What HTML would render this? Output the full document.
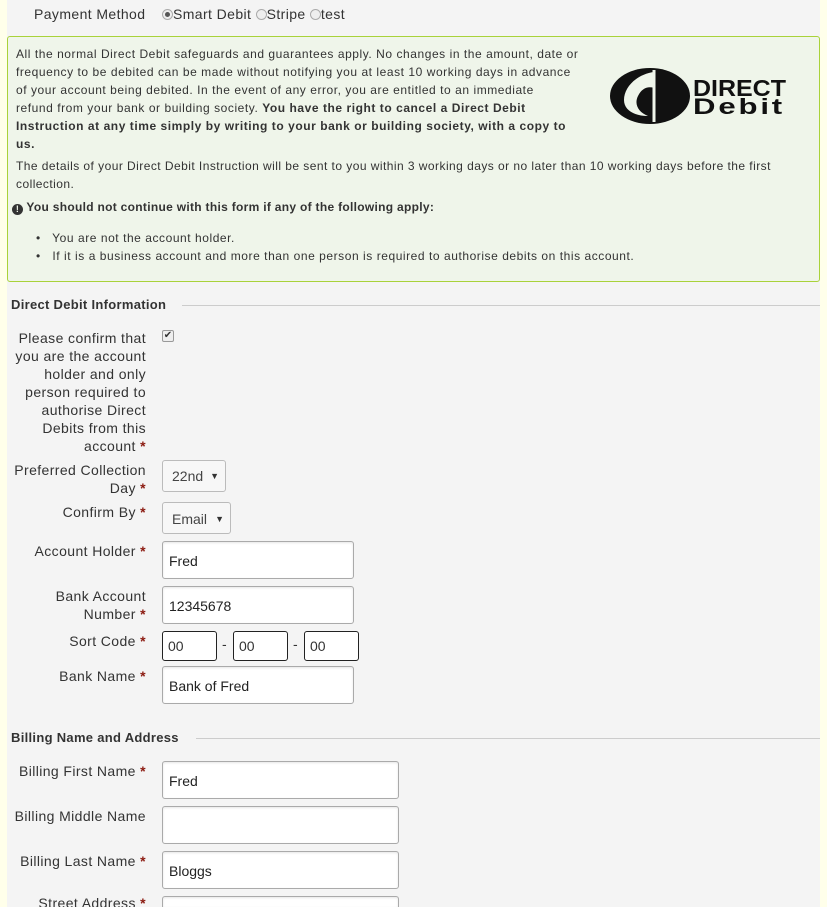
<!DOCTYPE html>
<html style="height:907px;overflow:hidden"><head><meta charset="utf-8"><style>
*{box-sizing:border-box;margin:0;padding:0}
body{width:827px;height:907px;overflow:hidden;background:#f4f4f4;font-family:"Liberation Sans",sans-serif;color:#333;position:relative}
.strip{position:absolute;top:0;bottom:0;background:#ffffea}
.a{position:absolute;white-space:nowrap}
.lbl{position:absolute;right:681px;text-align:right;font-size:14px;line-height:18px;color:#333;letter-spacing:.4px;white-space:nowrap}
.req{color:#8b1a10;font-weight:bold}
.inp{position:absolute;background:#fff;border:1px solid #aaa;border-radius:3px;font-size:14px;color:#222;padding-left:6px;box-shadow:inset 0 1px 2px rgba(0,0,0,.1)}
.sel{position:absolute;background:#f7f7f7;border:1px solid #bbb;border-radius:3px;font-size:14px;color:#444;padding-left:9px}
.sel span{position:absolute;right:6px;font-size:9px;color:#333}
.sc{position:absolute;top:631px;width:55px;height:30px;border:1px solid #222;border-radius:3px;background:#fff;font-size:14px;line-height:28px;padding-left:5px}
.radio{display:inline-block;width:11px;height:11px;border:1px solid #aaa;border-radius:50%;background:#eee;vertical-align:-1px;position:relative}
.radio.on::after{content:"";position:absolute;left:2px;top:2px;width:5px;height:5px;border-radius:50%;background:#555}
.hd{position:absolute;left:11px;font-size:13px;font-weight:bold;color:#333;letter-spacing:.3px}
.hl{position:absolute;right:7px;height:1px;background:#ccc}
.box{position:absolute;left:7px;top:36px;width:813px;height:246px;background:#eff5ea;border:1px solid #a9d23a;border-radius:3px}
.bt{font-size:12px;line-height:18px;color:#333;letter-spacing:.55px}
</style></head><body>
<div class="strip" style="left:0;width:7px"></div>
<div class="strip" style="left:820px;width:7px"></div>

<div class="a" style="left:34px;top:5px;font-size:14px;line-height:18px;letter-spacing:.4px">Payment Method</div>
<div class="a" style="left:162px;top:5px;font-size:14px;line-height:18px;letter-spacing:.4px"><span class="radio on"></span>Smart Debit <span class="radio"></span>Stripe <span class="radio"></span>test</div>

<div class="box"></div>
<div class="a bt" style="left:16px;top:45px">All the normal Direct Debit safeguards and guarantees apply. No changes in the amount, date or<br>frequency to be debited can be made without notifying you at least 10 working days in advance<br>of your account being debited. In the event of any error, you are entitled to an immediate<br>refund from your bank or building society. <b>You have the right to cancel a Direct Debit</b><br><b>Instruction at any time simply by writing to your bank or building society, with a copy to</b><br><b>us.</b></div>
<div class="a bt" style="left:16px;top:157px;letter-spacing:.45px">The details of your Direct Debit Instruction will be sent to you within 3 working days or no later than 10 working days before the first<br>collection.</div>
<div class="a bt" style="left:12px;top:198px;font-weight:bold;letter-spacing:.3px"><span style="display:inline-block;width:11px;height:11px;border-radius:50%;background:#333;color:#eff5ea;font-size:9px;line-height:11px;text-align:center;vertical-align:-1px">!</span> You should not continue with this form if any of the following apply:</div>
<div class="a bt" style="left:36px;top:229px">&bull;&nbsp;&nbsp; You are not the account holder.</div>
<div class="a bt" style="left:36px;top:247px">&bull;&nbsp;&nbsp; If it is a business account and more than one person is required to authorise debits on this account.</div>

<svg class="a" style="left:608px;top:64px" width="182" height="64" viewBox="0 0 182 64">
<ellipse cx="42" cy="32" rx="40" ry="28" fill="#111"/>
<path d="M46 8 C30 10 16 22 16 36 C16 46 26 52 40 52 C30 48 26 40 30 32 C34 24 40 22 46 24 Z" fill="#eff5ea"/>
<path d="M46 6 L46 58" stroke="#eff5ea" stroke-width="3"/>
<text x="85" y="32" font-family="Liberation Sans" font-weight="bold" font-size="23" textLength="93" lengthAdjust="spacingAndGlyphs" fill="#111">DIRECT</text>
<text x="85" y="50" font-family="Liberation Sans" font-weight="bold" font-size="22" textLength="92" lengthAdjust="spacingAndGlyphs" letter-spacing="2" fill="#111">Debit</text>
</svg>

<div class="hd" style="top:297px">Direct Debit Information</div>
<div class="hl" style="left:182px;top:305px"></div>

<div class="lbl" style="top:329px">Please confirm that<br>you are the account<br>holder and only<br>person required to<br>authorise Direct<br>Debits from this<br>account <span class="req">*</span></div>
<div class="a" style="left:162px;top:330px;width:12px;height:12px;border:1px solid #999;border-radius:2px;background:#eee;font-size:10px;line-height:10px;text-align:center">&#10004;</div>

<div class="lbl" style="top:461px">Preferred Collection<br>Day <span class="req">*</span></div>
<div class="sel" style="left:162px;top:460px;width:64px;height:32px;line-height:30px">22nd<span>&#9660;</span></div>
<div class="lbl" style="top:503px">Confirm By <span class="req">*</span></div>
<div class="sel" style="left:162px;top:502px;width:69px;height:32px;line-height:32px">Email<span>&#9660;</span></div>

<div class="lbl" style="top:542px">Account Holder <span class="req">*</span></div>
<div class="inp" style="left:162px;top:541px;width:192px;height:38px;line-height:38px">Fred</div>
<div class="lbl" style="top:587px">Bank Account<br>Number <span class="req">*</span></div>
<div class="inp" style="left:162px;top:586px;width:192px;height:38px;line-height:38px">12345678</div>
<div class="lbl" style="top:632px">Sort Code <span class="req">*</span></div>
<div class="sc" style="left:162px">00</div><div class="a" style="left:222px;top:636px;font-size:14px">-</div>
<div class="sc" style="left:233px">00</div><div class="a" style="left:293px;top:636px;font-size:14px">-</div>
<div class="sc" style="left:304px">00</div>
<div class="lbl" style="top:667px">Bank Name <span class="req">*</span></div>
<div class="inp" style="left:162px;top:666px;width:192px;height:38px;line-height:38px">Bank of Fred</div>

<div class="hd" style="top:730px">Billing Name and Address</div>
<div class="hl" style="left:196px;top:738px"></div>

<div class="lbl" style="top:762px">Billing First Name <span class="req">*</span></div>
<div class="inp" style="left:162px;top:761px;width:237px;height:38px;line-height:38px">Fred</div>
<div class="lbl" style="top:807px">Billing Middle Name</div>
<div class="inp" style="left:162px;top:806px;width:237px;height:38px"></div>
<div class="lbl" style="top:852px">Billing Last Name <span class="req">*</span></div>
<div class="inp" style="left:162px;top:851px;width:237px;height:38px;line-height:38px">Bloggs</div>
<div class="lbl" style="top:894px">Street Address <span class="req">*</span></div>
<div class="inp" style="left:162px;top:896px;width:237px;height:11px;border-bottom:none;border-radius:3px 3px 0 0"></div>
</body></html>
